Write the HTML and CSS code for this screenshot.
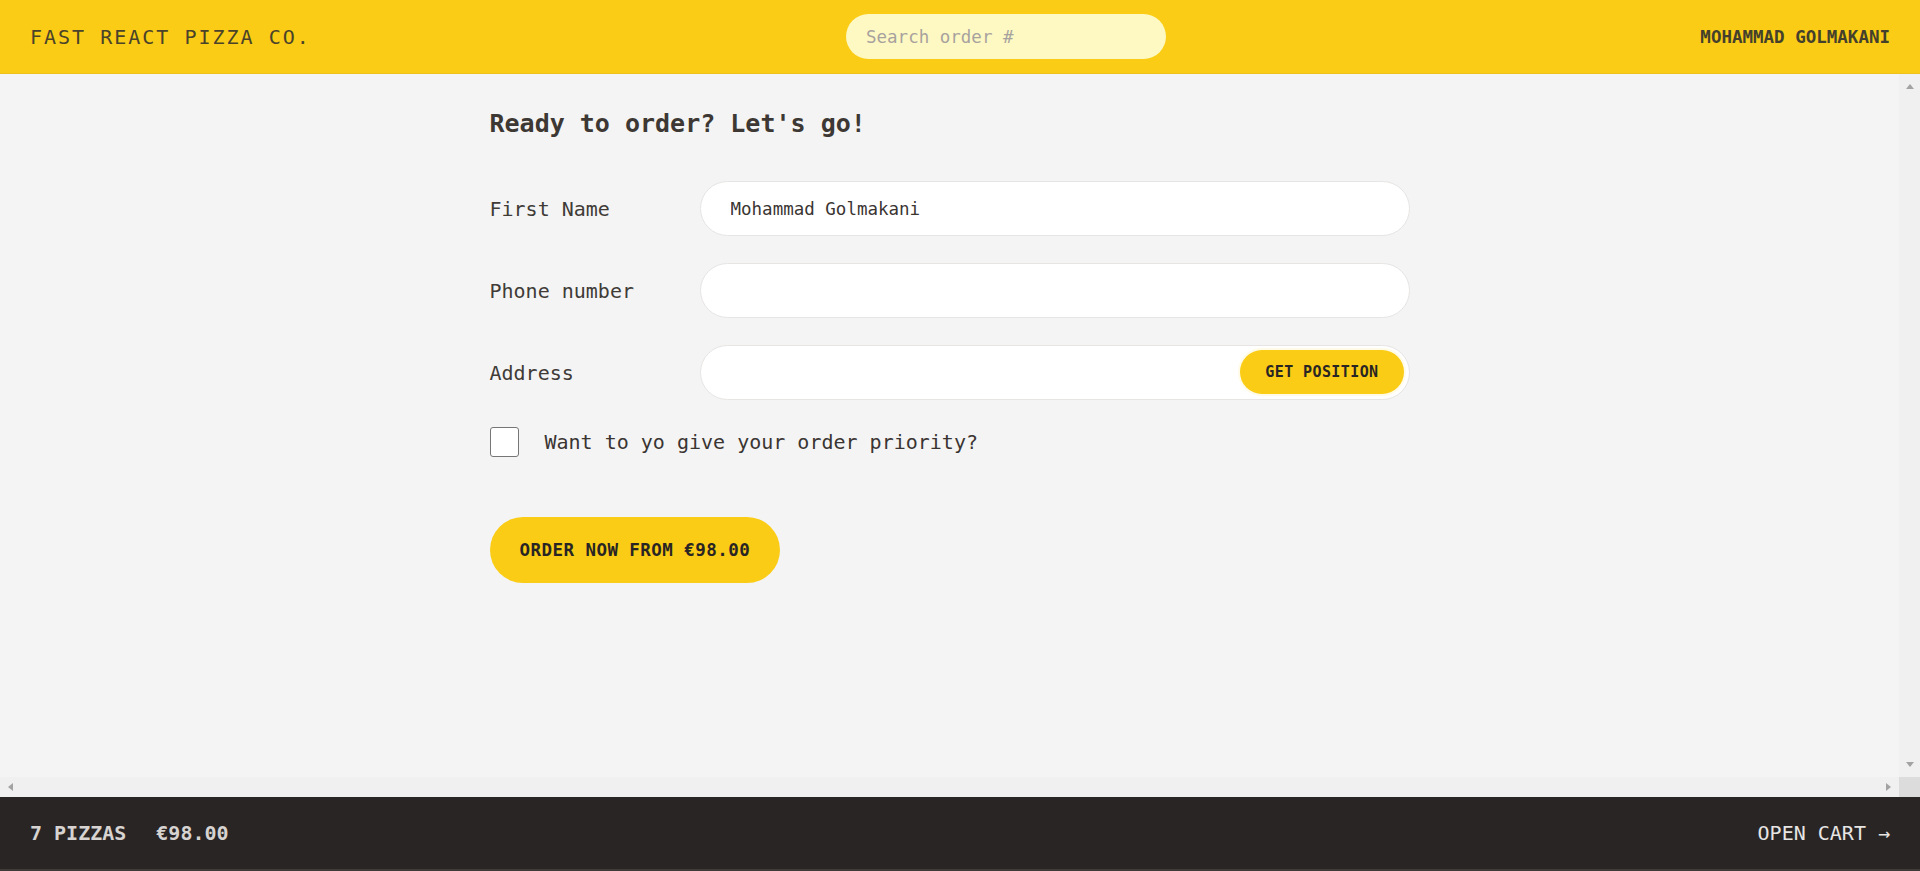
FILE: index.html
```html
<!DOCTYPE html>
<html lang="en">
<head>
<meta charset="utf-8">
<title>Fast React Pizza Co.</title>
<link rel="stylesheet" href="styles.css">
</head>
<body>
<div class="app">
  <header class="header">
    <a class="logo" href="#">Fast React Pizza Co.</a>
    <form class="search">
      <input class="search-input" type="text" placeholder="Search order #">
    </form>
    <div class="username">Mohammad Golmakani</div>
  </header>

  <main class="main">
    <div class="viewport">
      <div class="order">
        <h2 class="title">Ready to order? Let's go!</h2>
        <form class="form">
          <div class="row">
            <label class="label">First Name</label>
            <input class="input" type="text" value="Mohammad Golmakani">
          </div>
          <div class="row">
            <label class="label">Phone number</label>
            <input class="input" type="tel">
          </div>
          <div class="row">
            <label class="label">Address</label>
            <div class="field">
              <input class="input" type="text">
              <button type="button" class="pos-btn">Get position</button>
            </div>
          </div>
          <div class="check-row">
            <input class="checkbox" type="checkbox" id="priority">
            <label class="check-label" for="priority">Want to yo give your order priority?</label>
          </div>
          <button type="button" class="order-btn">Order now from €98.00</button>
        </form>
      </div>
    </div>
    <div class="vbar" aria-hidden="true">
      <span class="arrow arrow-up"></span>
      <span class="arrow arrow-down"></span>
    </div>
    <div class="hbar" aria-hidden="true">
      <span class="arrow arrow-left"></span>
      <span class="arrow arrow-right"></span>
    </div>
    <div class="corner" aria-hidden="true"></div>
  </main>

  <footer class="cart">
    <p class="cart-summary"><span>7 pizzas</span><span>€98.00</span></p>
    <a class="cart-link" href="#">Open cart →</a>
  </footer>
</div>
</body>
</html>
```

FILE: styles.css
```css
* { box-sizing: border-box; }

html, body {
  margin: 0;
  height: 100%;
}

body {
  font-family: "DejaVu Sans Mono", "Liberation Mono", monospace;
  color: #44403c;
  background: #f5f5f4;
}

.app {
  display: grid;
  grid-template-rows: 74px 1fr 74px;
  height: 100vh;
}

/* Header */
.header {
  display: grid;
  grid-template-columns: 816px 320px 1fr;
  align-items: center;
  padding: 0 30px;
  background: #facc15;
  border-bottom: 1px solid #eec21a;
}

.logo {
  font-size: 20px;
  letter-spacing: 2px;
  text-transform: uppercase;
  color: #4a4329;
  text-decoration: none;
}

.search { margin: 0; }

.search-input {
  width: 320px;
  height: 45px;
  border: none;
  border-radius: 999px;
  background: #fef9c3;
  padding: 0 20px;
  font-family: inherit;
  font-size: 17.5px;
  color: #44403c;
  outline: none;
}
.search-input::placeholder { color: #a8a29e; }

.username {
  justify-self: end;
  font-size: 17.5px;
  font-weight: bold;
  text-transform: uppercase;
  color: #44402c;
}

/* Main area with its scrollbars */
.main {
  display: grid;
  grid-template-columns: 1fr 21px;
  grid-template-rows: 1fr 20px;
  min-height: 0;
  background: #f4f4f4;
}

.viewport {
  min-height: 0;
  overflow: hidden;
}

.vbar {
  display: flex;
  flex-direction: column;
  justify-content: space-between;
  align-items: center;
  padding: 10px 0;
  background: #f0f0f0;
}

.hbar {
  display: flex;
  justify-content: space-between;
  align-items: center;
  padding: 0 8px;
  background: #f0f0f0;
}

.corner { background: #dcdcdc; }

.arrow {
  display: block;
  width: 0;
  height: 0;
  border-style: solid;
  border-color: transparent;
}
.arrow-up {
  border-width: 0 4.5px 5px 4.5px;
  border-bottom-color: #a3a3a3;
}
.arrow-down {
  border-width: 5px 4.5px 0 4.5px;
  border-top-color: #a3a3a3;
}
.arrow-left {
  border-width: 4.5px 5px 4.5px 0;
  border-right-color: #a3a3a3;
}
.arrow-right {
  border-width: 4.5px 0 4.5px 5px;
  border-left-color: #a3a3a3;
}

.order {
  max-width: 960px;
  margin: 0 auto;
  padding: 32px 20px 30px;
}

.title {
  margin: 0 0 40px;
  font-size: 25px;
  line-height: 35px;
  font-weight: bold;
  color: #3d3833;
}

.form { margin: 0; }

.row {
  display: flex;
  align-items: center;
  margin-bottom: 27px;
}

.label {
  flex: 0 0 210px;
  font-size: 20px;
  color: #403b37;
}

.field {
  position: relative;
  flex: 1;
  display: flex;
}

.input {
  flex: 1;
  width: 100%;
  height: 55px;
  border: 1px solid #e7e5e4;
  border-radius: 999px;
  background: #fff;
  padding: 0 30px;
  font-family: inherit;
  font-size: 17.5px;
  color: #3a3532;
  outline: none;
}

.pos-btn {
  position: absolute;
  top: 5px;
  right: 6px;
  height: 44px;
  padding: 0 25px;
  border: none;
  border-radius: 999px;
  background: #facc15;
  box-shadow: 0 0 0 2px #fffbe6;
  font-family: inherit;
  font-size: 15px;
  font-weight: bold;
  letter-spacing: 0.4px;
  text-transform: uppercase;
  color: #292524;
}

.check-row {
  display: flex;
  align-items: center;
  height: 30px;
}

.checkbox {
  appearance: none;
  margin: 0;
  width: 29px;
  height: 30px;
  border: 1px solid #767676;
  border-radius: 3px;
  background: #fff;
}

.check-label {
  margin-left: 26px;
  font-size: 20px;
  color: #3a3532;
}

.order-btn {
  margin-top: 60px;
  height: 66px;
  padding: 0 30px;
  border: none;
  border-radius: 999px;
  background: #facc15;
  font-family: inherit;
  font-size: 17.5px;
  font-weight: bold;
  letter-spacing: 0.45px;
  text-transform: uppercase;
  color: #292524;
}

/* Cart footer */
.cart {
  display: flex;
  align-items: center;
  justify-content: space-between;
  padding: 0 30px;
  background: #292524;
  border-bottom: 2px solid #3e3b39;
  color: #d6d3d1;
  font-size: 20px;
  text-transform: uppercase;
}

.cart-summary {
  margin: 0;
  display: flex;
  gap: 30px;
  font-weight: bold;
  color: #d6d3d1;
}

.cart-link {
  color: #e7e5e4;
  text-decoration: none;
}
```
